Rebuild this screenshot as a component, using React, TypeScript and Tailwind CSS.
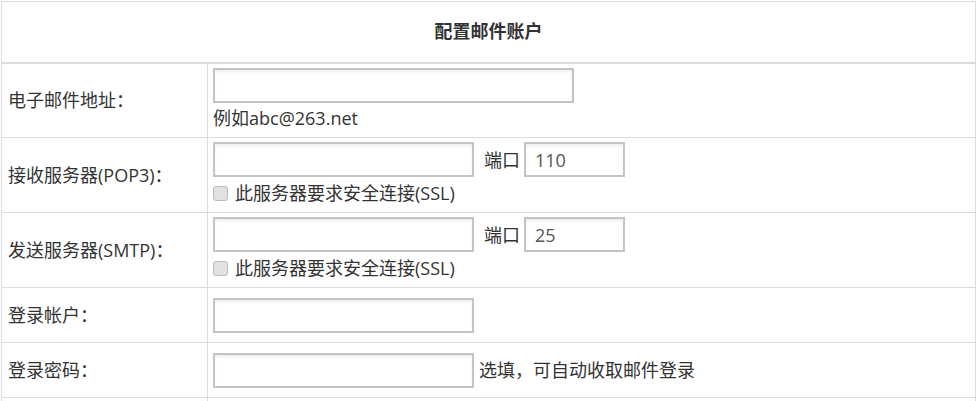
import React from "react"

const font = "font-['Open_Sans','Noto_Sans_CJK_SC',sans-serif]"

const inputCls =
  "h-[35px] border-2 border-[#c4c4c4] bg-white px-[9px] text-[18px] text-[#555] outline-none shadow-[inset_0_2px_3px_rgba(0,0,0,0.07)]"

function SslCheck() {
  return (
    <label className="mt-[4px] flex h-[24px] items-center gap-[7px]">
      <span className="block h-[15px] w-[15px] shrink-0 rounded-[3px] border border-[#bcbcbc] bg-[#e1e1e1]" />
      <span>此服务器要求安全连接(SSL)</span>
    </label>
  )
}

export default function App() {
  return (
    <div className={`bg-white pl-[1px] pt-[1px] text-[18px] text-[#333] ${font}`}>
      <table className="w-[975px] border-collapse">
        <tbody>
          <tr className="h-[61px]">
            <td
              colSpan={2}
              className="border border-[#dcdcdc] border-b-2 text-center align-middle text-[18px] font-bold"
            >
              配置邮件账户
            </td>
          </tr>

          <tr className="h-[75px]">
            <td className="w-[206px] border border-[#dcdcdc] pl-[6px] align-middle">电子邮件地址：</td>
            <td className="border border-[#dcdcdc] pl-[5px] pt-[4px] align-top">
              <input className={`${inputCls} w-[361px]`} />
              <div className="mt-[3px] h-[24px] leading-[24px]">例如abc@263.net</div>
            </td>
          </tr>

          <tr className="h-[75px]">
            <td className="border border-[#dcdcdc] pl-[6px] align-middle">接收服务器(POP3)：</td>
            <td className="border border-[#dcdcdc] pl-[5px] pt-[4px] align-top">
              <div className="flex items-baseline">
                <input className={`${inputCls} w-[261px]`} />
                <span className="ml-[10px] mr-[4px]">端口</span>
                <input className={`${inputCls} w-[101px]`} defaultValue="110" />
              </div>
              <SslCheck />
            </td>
          </tr>

          <tr className="h-[75px]">
            <td className="border border-[#dcdcdc] pl-[6px] align-middle">发送服务器(SMTP)：</td>
            <td className="border border-[#dcdcdc] pl-[5px] pt-[4px] align-top">
              <div className="flex items-baseline">
                <input className={`${inputCls} w-[261px]`} />
                <span className="ml-[10px] mr-[4px]">端口</span>
                <input className={`${inputCls} w-[101px]`} defaultValue="25" />
              </div>
              <SslCheck />
            </td>
          </tr>

          <tr className="h-[55px]">
            <td className="border border-[#dcdcdc] pl-[6px] align-middle">登录帐户：</td>
            <td className="border border-[#dcdcdc] pl-[5px] align-middle">
              <input className={`${inputCls} w-[261px]`} />
            </td>
          </tr>

          <tr className="h-[55px]">
            <td className="border border-[#dcdcdc] pl-[6px] align-middle">登录密码：</td>
            <td className="border border-[#dcdcdc] pl-[5px] align-middle">
              <div className="flex items-baseline">
                <input type="password" className={`${inputCls} w-[261px]`} />
                <span className="ml-[5px]">选填，可自动收取邮件登录</span>
              </div>
            </td>
          </tr>

          <tr className="h-[55px]">
            <td className="border border-[#dcdcdc]"></td>
            <td className="border border-[#dcdcdc]"></td>
          </tr>
        </tbody>
      </table>
    </div>
  )
}
